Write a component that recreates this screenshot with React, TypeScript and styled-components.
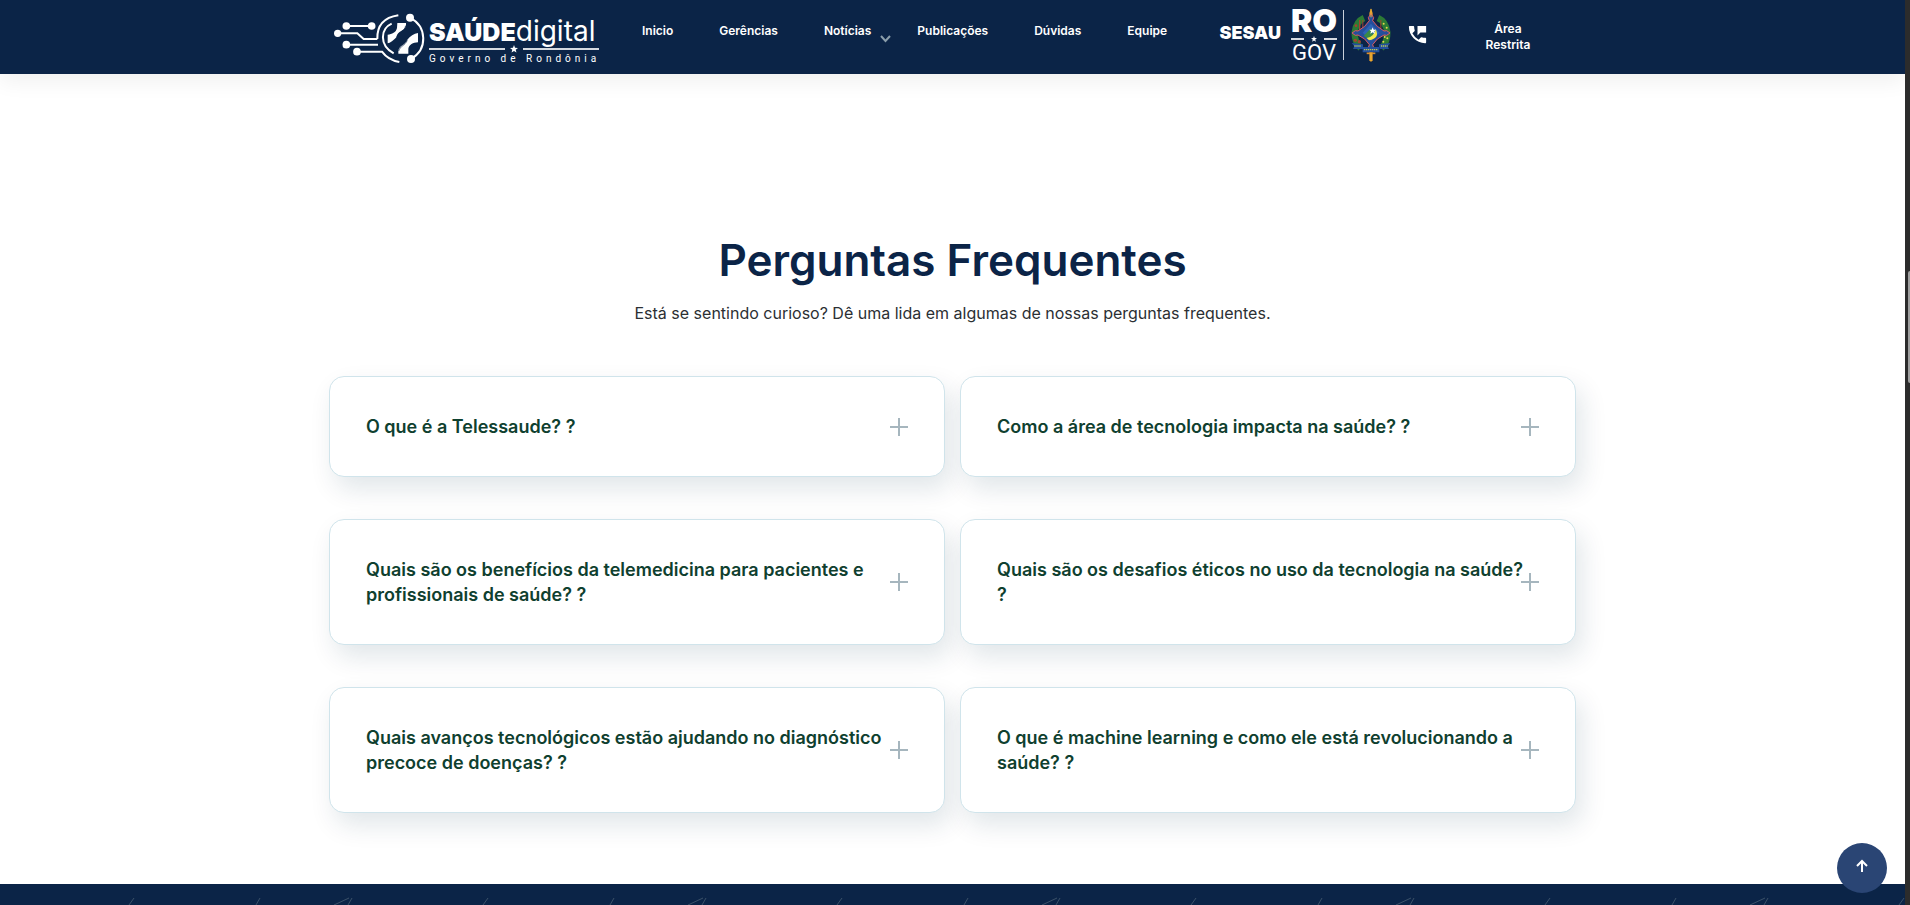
import React, { useState } from 'react';
import styled, { createGlobalStyle } from 'styled-components';
import { MdPermPhoneMsg } from 'react-icons/md';

const navy = '#0b2447';

const GlobalStyle = createGlobalStyle`
  *, *::before, *::after { box-sizing: border-box; }
  body {
    margin: 0;
    background: #fff;
    color: #2b2f33;
    font-family: Inter, 'Liberation Sans', sans-serif;
    font-size: 16px;
  }
  a { color: inherit; text-decoration: none; }
  button { font: inherit; border: 0; cursor: pointer; }
`;

const Shell = styled.div`
  display: grid;
  grid-template-columns: minmax(0, 1fr) 5px;
  min-height: 100vh;
`;

const Page = styled.div`
  display: flex;
  flex-direction: column;
`;

const Container = styled.div`
  width: 100%;
  max-width: 1247px;
  margin: 0 auto;
`;

/* ---------- header ---------- */

const Header = styled.header`
  background: ${navy};
  color: #fff;
  box-shadow: 0 8px 20px rgba(0, 0, 0, 0.06);
`;

const HeaderRow = styled(Container)`
  display: flex;
  align-items: center;
  height: 74px;
  padding-right: 38px;
`;

const LogoLink = styled.a`
  display: flex;
  align-items: center;
  flex: none;
`;

const Wordmark = styled.span`
  display: flex;
  flex-direction: column;
  width: 170px;
  padding-top: 8px;
`;

const WordmarkName = styled.span`
  display: flex;
  align-items: baseline;
  line-height: 28px;
  white-space: nowrap;
`;

const Strong = styled.strong`
  font-size: 25px;
  font-weight: 900;
`;

const Light = styled.span`
  font-size: 28px;
  font-weight: 400;
`;

const Tagline = styled.span`
  font: 400 10px/14px Roboto, sans-serif;
  letter-spacing: 4px;
  white-space: nowrap;
`;

const StarRule = styled.span<{ $gap: number }>`
  display: flex;
  align-items: center;
  gap: ${(p) => p.$gap}px;
  height: ${(p) => p.$gap + 1}px;
  &::before, &::after {
    content: '';
    flex: 1;
    height: 2px;
    background: #d5dae1;
  }
  svg { flex: none; }
`;

const Nav = styled.nav`
  display: flex;
  gap: 46px;
  margin-left: 43px;
  padding-bottom: 12px;
  font-size: 12px;
  font-weight: 600;
  line-height: 16px;
`;

const NavLink = styled.a`
  position: relative;
  svg {
    position: absolute;
    left: 100%;
    top: 12px;
    margin-left: 9px;
  }
`;

const Brands = styled.div`
  display: flex;
  align-items: center;
  margin-left: auto;
  padding-bottom: 4px;
`;

const Sesau = styled.span`
  padding-bottom: 4px;
  margin-right: 10px;
  font-size: 18px;
  font-weight: 900;
  line-height: 24px;
`;

const RoGov = styled.span`
  display: flex;
  flex-direction: column;
  width: 46px;
  text-align: center;
`;

const Ro = styled.strong`
  margin: 0 -2px;
  font-size: 32px;
  font-weight: 900;
  line-height: 28px;
`;

const Gov = styled.span`
  font-family: Roboto, sans-serif;
  font-size: 22px;
  line-height: 20px;
`;

const Divider = styled.span`
  width: 1px;
  height: 50px;
  margin: 0 7px 0 6px;
  background: #c9d0da;
`;

const PhoneLink = styled.a`
  display: flex;
  margin: 0 49px 6px 15px;
`;

const RestrictedLink = styled.a`
  width: 60px;
  font-size: 12px;
  font-weight: 600;
  line-height: 16px;
  text-align: center;
`;

/* ---------- questions ---------- */

const Faq = styled.main`
  padding: 159px 0 71px;
`;

const Title = styled.h1`
  margin: 0;
  color: ${navy};
  font-size: 44px;
  font-weight: 600;
  line-height: 54px;
  text-align: center;
`;

const Lead = styled.p`
  margin: 14px 0 51px;
  line-height: 24px;
  text-align: center;
`;

const Questions = styled.div`
  display: grid;
  grid-template-columns: 1fr 1fr;
  gap: 42px 15px;
`;

const Question = styled.button`
  display: flex;
  align-items: center;
  padding: 37px 36px;
  border: 1px solid #d0e4eb;
  border-radius: 15px;
  background: #fff;
  box-shadow: 6px 12px 26px rgba(11, 50, 71, 0.12);
  color: #0f402f;
  font-size: 18px;
  font-weight: 600;
  line-height: 25px;
  text-align: left;
`;

const QuestionText = styled.span`
  flex: 1;
`;

const Plus = styled.span`
  flex: none;
  width: 18px;
  height: 18px;
  margin-left: -6px;
  background:
    linear-gradient(#a6b6be, #a6b6be) center / 18px 2px no-repeat,
    linear-gradient(#a6b6be, #a6b6be) center / 2px 18px no-repeat;
`;

/* ---------- footer and page extras ---------- */

const Footer = styled.footer`
  flex: 1;
  min-height: 21px;
  background: ${navy};
  svg { display: block; }
`;

const ToTop = styled.button`
  position: fixed;
  right: 23px;
  bottom: 12px;
  display: flex;
  justify-content: center;
  width: 50px;
  height: 50px;
  padding: 16px 0 0;
  border-radius: 50%;
  background: #2a4574;
`;

const ScrollTrack = styled.div`
  display: flex;
  flex-direction: column;
  align-items: flex-end;
  padding: 271px 0 0;
  background: #2c2c2c;
`;

const ScrollThumb = styled.span`
  width: 2px;
  height: 112px;
  border-radius: 2px 0 0 2px;
  background: #9f9f9f;
`;

const Star = ({ size }: { size: number }) => (
  <svg width={size} height={size} viewBox="0 0 20 20" aria-hidden="true">
    <path fill="#fff" d="M10 0l2.6 6.8 7.4.4-5.800 4.600 2 7.200L10 15l-6.200 4 2-7.200L0 7.200l7.400-.4z" />
  </svg>
);

const LogoSymbol = () => (
  <svg width="100" height="74" viewBox="27 0 300 222" fill="none" stroke="#fff" strokeWidth="6" aria-hidden="true">
    <path d="M79 78H155M53 100H112L131 117H172M79 134H174M111 155H186Q204 180 238 186" />
    <path d="M172 117Q170 56 235 46" />
    <path d="M215 71C182 86 176 134 221 160" />
    <path d="M270 53C321 80 324 147 273 177" />
    <g fill="#fff" stroke="none">
      <circle cx="53" cy="100" r="11" />
      <circle cx="79" cy="78" r="11.500" />
      <circle cx="155" cy="78" r="11.500" />
      <circle cx="79" cy="134" r="11.500" />
      <circle cx="111" cy="155" r="11.500" />
      <circle cx="270" cy="53" r="12" />
      <circle cx="273" cy="177" r="12" />
      <path d="M232 69H258V76C254 96 233 90 229 112C222 120 210 130 203 130V104C216 102 228 98 231 84Z" />
      <path d="M294 99V127C279 128 267 134 265 146V161H235V154C237 134 254 138 262 119C270 108 282 101 294 99Z" />
    </g>
    <path d="M257 77C253 96 237 94 230 112M236 153C241 137 254 138 262 121" stroke={navy} strokeWidth="2" />
  </svg>
);

const Crest = () => (
  <svg width="40" height="54" viewBox="211 25 120 162" role="img" aria-label="Brasão de Rondônia">
    <path d="M271 26l5 14v142l-5 5-5-5V40z" fill="#e0952b" />
    <path d="M250 55Q226 66 222 98Q221 126 240 146" fill="none" stroke="#2c7a35" strokeWidth="19" />
    <path d="M292 55Q316 66 320 98Q321 126 302 146" fill="none" stroke="#2c7a35" strokeWidth="19" />
    <g fill="#a2442f">
      <circle cx="226" cy="78" r="4" /><circle cx="224" cy="122" r="5" /><circle cx="236" cy="126" r="5" />
      <path d="M235 61h4v32h-4zM245 61h3v26h-3zM299 61h3v26h-3z" />
    </g>
    <g fill="#e3d64a">
      <circle cx="309" cy="72" r="3" /><circle cx="318" cy="84" r="3" /><circle cx="312" cy="112" r="3" />
      <circle cx="308" cy="126" r="3" /><circle cx="320" cy="116" r="3" />
    </g>
    <path
      d="M271 42l8 12-3 9 14 17 20 14 8-1 10 7-10 7-8-1-20 12-14 17 3 9-8 8-8-8 3-9-14-17-20-12-8 1-10-7 10-7 8 1 20-14 14-17-3-9z"
      fill="#244f9c" stroke="#dc5a62" strokeWidth="3"
    />
    <path d="M271 72l25 27-25 25-25-25z" fill="#2d63b5" />
    <path d="M249 108l22-22 6 20-14 13z" fill="#3a8a46" />
    <path d="M285 88q14 28-20 34l-7-7q23-4 27-27z" fill="#f1e84b" />
    <path d="M276 83l3 7h7l-5 5 2 7-7-4-7 4 2-7-5-5h7z" fill="#fff" />
    <path d="M213 130l34 4v14h-30l4-8zM329 130l-34 4v14h30l-4-8zM246 142h50v16h-50z" fill="#23509d" />
    <path d="M221 139h20M301 139h20M250 150h42" stroke="#b8c35b" strokeWidth="4" strokeDasharray="4 2" />
    <path d="M258 161h26" stroke="#d98c2d" strokeWidth="5" />
    <path d="M271 28v25M271 160v24" stroke="#f0bb35" strokeWidth="3" />
  </svg>
);

const navItems = [
  { label: 'Inicio' },
  { label: 'Gerências' },
  { label: 'Notícias', menu: true },
  { label: 'Publicações' },
  { label: 'Dúvidas' },
  { label: 'Equipe' },
];

const questions = [
  'O que é a Telessaude? ?',
  'Como a área de tecnologia impacta na saúde? ?',
  'Quais são os benefícios da telemedicina para pacientes e profissionais de saúde? ?',
  'Quais são os desafios éticos no uso da tecnologia na saúde? ?',
  'Quais avanços tecnológicos estão ajudando no diagnóstico precoce de doenças? ?',
  'O que é machine learning e como ele está revolucionando a saúde? ?',
];

export default function App() {
  const [selected, setSelected] = useState<number | null>(null);

  return (
    <Shell>
      <GlobalStyle />
      <Page>
        <Header>
          <HeaderRow>
            <LogoLink href="#inicio">
              <LogoSymbol />
              <Wordmark>
                <WordmarkName>
                  <Strong>SAÚDE</Strong>
                  <Light>digital</Light>
                </WordmarkName>
                <StarRule $gap={5}>
                  <Star size={8} />
                </StarRule>
                <Tagline>Governo de Rondônia</Tagline>
              </Wordmark>
            </LogoLink>

            <Nav>
              {navItems.map((item) => (
                <NavLink key={item.label} href="#">
                  {item.label}
                  {item.menu && (
                    <svg width="11" height="8" viewBox="0 0 11 8" fill="none" stroke="#8b9eab" strokeWidth="2">
                      <path d="M1 1l4.500 5L10 1" />
                    </svg>
                  )}
                </NavLink>
              ))}
            </Nav>

            <Brands>
              <Sesau>SESAU</Sesau>
              <RoGov>
                <Ro>RO</Ro>
                <StarRule $gap={7}>
                  <Star size={6} />
                </StarRule>
                <Gov>GOV</Gov>
              </RoGov>
              <Divider />
              <Crest />
            </Brands>
            <PhoneLink href="#contato" aria-label="Contato">
              <MdPermPhoneMsg size={23} />
            </PhoneLink>
            <RestrictedLink href="#restrita">Área Restrita</RestrictedLink>
          </HeaderRow>
        </Header>

        <Faq>
          <Container>
            <Title>Perguntas Frequentes</Title>
            <Lead>Está se sentindo curioso? Dê uma lida em algumas de nossas perguntas frequentes.</Lead>
            <Questions>
              {questions.map((text, index) => (
                <Question
                  key={text}
                  type="button"
                  aria-expanded={selected === index}
                  onClick={() => setSelected(selected === index ? null : index)}
                >
                  <QuestionText>{text}</QuestionText>
                  <Plus />
                </Question>
              ))}
            </Questions>
          </Container>
        </Faq>

        <Footer>
          <svg width="100%" height="21" aria-hidden="true">
            <defs>
              <pattern id="strokes" width="354" height="21" patternUnits="userSpaceOnUse">
                <path
                  d="M134 14l-5 7M260 14l-4 7M334 21l15-7M352 14l-4 7"
                  fill="none" stroke="#3a5068" strokeWidth="1"
                />
              </pattern>
            </defs>
            <rect width="100%" height="21" fill="url(#strokes)" />
          </svg>
        </Footer>
      </Page>

      <ScrollTrack>
        <ScrollThumb />
      </ScrollTrack>

      <ToTop type="button" aria-label="Voltar ao topo">
        <svg width="12" height="14" viewBox="0 0 12 14" fill="none" stroke="#fff" strokeWidth="2">
          <path d="M6 13V3M1 7l5-5 5 5" />
        </svg>
      </ToTop>
    </Shell>
  );
}
